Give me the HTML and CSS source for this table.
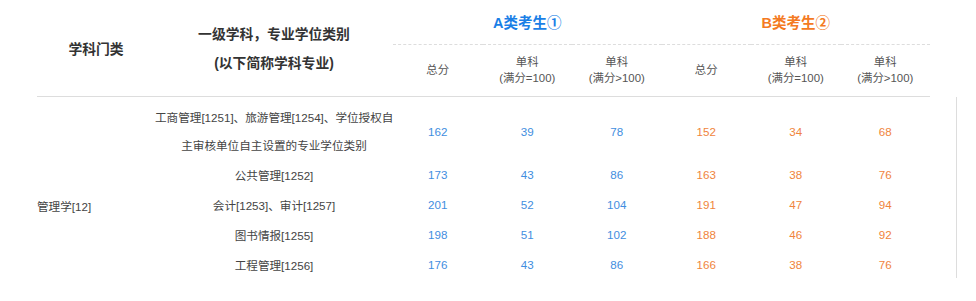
FILE: index.html
```html
<!DOCTYPE html>
<html lang="zh">
<head>
<meta charset="utf-8">
<link rel="stylesheet" href="styles.css">
</head>
<body>
<div class="wrap">
  <table class="score">
    <colgroup>
      <col class="c-cat"><col class="c-sub">
      <col class="c-n"><col class="c-n"><col class="c-n"><col class="c-n"><col class="c-n"><col class="c-n">
    </colgroup>
    <thead>
      <tr class="h1">
        <th rowspan="2" class="hd main">学科门类</th>
        <th rowspan="2" class="hd main two">一级学科，专业学位类别<br>(以下简称学科专业)</th>
        <th colspan="3" class="grp a">A类考生<span class="circ">①</span></th>
        <th colspan="3" class="grp b">B类考生<span class="circ">②</span></th>
      </tr>
      <tr class="h2">
        <th class="sh">总分</th>
        <th class="sh">单科<br>(满分=100)</th>
        <th class="sh">单科<br>(满分&gt;100)</th>
        <th class="sh">总分</th>
        <th class="sh">单科<br>(满分=100)</th>
        <th class="sh">单科<br>(满分&gt;100)</th>
      </tr>
    </thead>
    <tbody>
      <tr class="first">
        <td class="cat"></td>
        <td class="sub two">工商管理[1251]、旅游管理[1254]、学位授权自<br>主审核单位自主设置的专业学位类别</td>
        <td class="na">162</td><td class="na">39</td><td class="na">78</td>
        <td class="nb">152</td><td class="nb">34</td><td class="nb">68</td>
      </tr>
      <tr>
        <td class="cat"></td>
        <td class="sub">公共管理[1252]</td>
        <td class="na">173</td><td class="na">43</td><td class="na">86</td>
        <td class="nb">163</td><td class="nb">38</td><td class="nb">76</td>
      </tr>
      <tr>
        <td class="cat">管理学[12]</td>
        <td class="sub">会计[1253]、审计[1257]</td>
        <td class="na">201</td><td class="na">52</td><td class="na">104</td>
        <td class="nb">191</td><td class="nb">47</td><td class="nb">94</td>
      </tr>
      <tr>
        <td class="cat"></td>
        <td class="sub">图书情报[1255]</td>
        <td class="na">198</td><td class="na">51</td><td class="na">102</td>
        <td class="nb">188</td><td class="nb">46</td><td class="nb">92</td>
      </tr>
      <tr>
        <td class="cat"></td>
        <td class="sub">工程管理[1256]</td>
        <td class="na">176</td><td class="na">43</td><td class="na">86</td>
        <td class="nb">166</td><td class="nb">38</td><td class="nb">76</td>
      </tr>
    </tbody>
  </table>
  <div class="vline"></div>
</div>
</body>
</html>
```

FILE: styles.css
```css
html, body {
  margin: 0;
  padding: 0;
  background: #ffffff;
}

body {
  font-family: "Liberation Sans", "Noto Sans CJK SC", sans-serif;
  color: #333333;
}

.wrap {
  display: flex;
  align-items: flex-start;
  padding-left: 37px;
}

.score {
  width: 893px;
  border-collapse: collapse;
  table-layout: fixed;
}

.c-cat { width: 118px; }
.c-sub { width: 238px; }
.c-n { width: 89.5px; }

.score th,
.score td {
  padding: 0;
  text-align: center;
  vertical-align: middle;
  white-space: nowrap;
}

.h1 { height: 44px; }
.h2 { height: 52px; }

.hd {
  font-size: 13.8px;
  font-weight: bold;
  color: #333333;
  border-bottom: 1px solid #dddddd;
}

.hd.two {
  line-height: 29px;
  padding-top: 2px;
}

.grp {
  font-size: 14.5px;
  font-weight: bold;
  border-bottom: 1px dashed #dddddd;
}

.circ {
  font-family: "Noto Sans CJK SC", sans-serif;
  font-weight: bold;
}

.grp.a { color: #1a7fe6; }
.grp.b { color: #f47a22; }

.sh {
  font-size: 11.4px;
  font-weight: normal;
  color: #555555;
  line-height: 16px;
  border-bottom: 1px solid #dddddd;
}

.score tbody tr { height: 30px; }

.score tbody tr.first { height: 62px; }
.score tbody tr.first td { padding-top: 7px; }

.score td {
  font-size: 11.6px;
}

.cat {
  text-align: left !important;
  color: #444444;
  padding-top: 2px !important;
}

.sub {
  color: #444444;
}

.sub.two { line-height: 28px; }

.na { color: #3f8ee0; }
.nb { color: #f0843c; }

.vline {
  width: 1px;
  height: 181px;
  margin-top: 97px;
  margin-left: 26px;
  background: #dddddd;
}
```
